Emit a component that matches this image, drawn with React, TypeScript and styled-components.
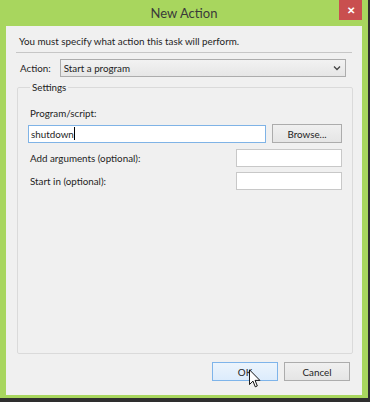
import React from 'react'
import styled, { createGlobalStyle } from 'styled-components'

const GlobalStyle = createGlobalStyle`
  html, body {
    margin: 0;
    padding: 0;
    background: #2e2e2e;
  }
  body {
    font-family: Lato, 'Noto Sans', sans-serif;
    color: #1e1e1e;
  }
`

const Window = styled.div`
  position: relative;
  width: 368px;
  height: 398px;
  box-sizing: border-box;
  background: #a8d65e;
  padding: 0 6px 3px 6px;
  display: flex;
  flex-direction: column;
`

const TitleBar = styled.div`
  height: 26px;
  display: grid;
  grid-template-columns: 1fr auto 1fr;
  align-items: start;
  margin: 0 -6px;
`

const Title = styled.div`
  grid-column: 2;
  font-size: 13px;
  line-height: 26px;
  color: #3a3a3a;
`

const CloseButton = styled.div`
  grid-column: 3;
  justify-self: end;
  margin-right: 6px;
  width: 23px;
  height: 20px;
  background: #c94f4f;
  color: #fff;
  font-size: 10px;
  font-weight: bold;
  display: flex;
  align-items: center;
  justify-content: center;
`

const Client = styled.div`
  flex: 1;
  background: #f0f0f0;
  display: flex;
  flex-direction: column;
  font-size: 9.8px;
`

const Header = styled.div`
  padding: 8px 13px 0 13px;
  height: 26px;
  box-sizing: border-box;
  line-height: 15px;
`

const Separator = styled.div`
  height: 1px;
  margin: 0 10px;
  background: #c6c6c6;
`

const ActionRow = styled.div`
  display: flex;
  align-items: center;
  margin: 6px 16px 0 14px;
  gap: 9px;
`

const Select = styled.div`
  flex: 1;
  height: 18px;
  box-sizing: border-box;
  border: 1px solid #acacac;
  background: linear-gradient(#f2f2f2, #e6e6e6);
  display: flex;
  align-items: center;
  justify-content: space-between;
  padding: 0 4px 0 3px;
`

const Fieldset = styled.fieldset`
  margin: 4px 9px 0 11px;
  padding: 13px 10px 0 10px;
  height: 273px;
  box-sizing: border-box;
  border: 1px solid #dadada;
  border-radius: 2px;
  display: flex;
  flex-direction: column;
`

const Legend = styled.legend`
  padding: 0 2px;
  margin-left: 2px;
  line-height: 12px;
`

const FieldLabel = styled.div`
  margin-left: 2px;
  line-height: 14px;
`

const Row = styled.div<{ $top: number }>`
  display: flex;
  align-items: center;
  gap: 6px;
  margin-top: ${({ $top }) => $top}px;
`

const TextBox = styled.div<{ $width?: number; $focused?: boolean }>`
  box-sizing: border-box;
  height: 18px;
  ${({ $width }) => ($width ? `width: ${$width}px;` : 'flex: 1;')}
  background: #fff;
  border: 1px solid ${({ $focused }) => ($focused ? '#7fb3e6' : '#c8c8c8')};
  display: flex;
  align-items: center;
  padding: 0 2px;
`

const Caret = styled.span`
  display: inline-block;
  width: 1px;
  height: 13px;
  background: #000;
`

const Spacer = styled.div`
  flex: 1;
`

const Button = styled.div<{ $primary?: boolean; $width: number }>`
  box-sizing: border-box;
  width: ${({ $width }) => $width}px;
  height: 19px;
  border: 1px solid ${({ $primary }) => ($primary ? '#7eb4ea' : '#acacac')};
  background: ${({ $primary }) =>
    $primary ? 'linear-gradient(#ecf4fc, #dcecfc)' : 'linear-gradient(#f0f0f0, #e5e5e5)'};
  display: flex;
  align-items: center;
  justify-content: center;
  line-height: 14px;
`

const Footer = styled.div`
  display: flex;
  justify-content: flex-end;
  gap: 6px;
  margin: 8px 12px 0 0;
`

const CursorIcon = styled.svg`
  position: absolute;
  left: 249px;
  top: 369px;
`

export default function App() {
  return (
    <>
      <GlobalStyle />
      <Window>
        <TitleBar>
          <Title>New Action</Title>
          <CloseButton>✕</CloseButton>
        </TitleBar>
        <Client>
          <Header>You must specify what action this task will perform.</Header>
          <Separator />
          <ActionRow>
            <span>Action:</span>
            <Select>
              <span>Start a program</span>
              <svg width="8" height="6" viewBox="0 0 8 6">
                <polyline points="1,1.5 4,4.5 7,1.5" fill="none" stroke="#444" strokeWidth="1.3" />
              </svg>
            </Select>
          </ActionRow>
          <Fieldset>
            <Legend>Settings</Legend>
            <FieldLabel>Program/script:</FieldLabel>
            <Row $top={4}>
              <TextBox $focused>
                shutdown
                <Caret />
              </TextBox>
              <Button $width={70}>Browse...</Button>
            </Row>
            <Row $top={6}>
              <FieldLabel>Add arguments (optional):</FieldLabel>
              <Spacer />
              <TextBox $width={106} />
            </Row>
            <Row $top={5}>
              <FieldLabel>Start in (optional):</FieldLabel>
              <Spacer />
              <TextBox $width={106} />
            </Row>
          </Fieldset>
          <Footer>
            <Button $primary $width={66}>OK</Button>
            <Button $width={66}>Cancel</Button>
          </Footer>
        </Client>
        <CursorIcon width="12" height="20" viewBox="0 0 13 21">
          <path
            d="M0.5 0.5 L0.5 16.5 L4.3 12.8 L6.8 19 L9 18 L6.6 12 L11.8 12 Z"
            fill="#fff"
            stroke="#000"
            strokeWidth="1"
            strokeLinejoin="miter"
          />
        </CursorIcon>
      </Window>
    </>
  )
}
